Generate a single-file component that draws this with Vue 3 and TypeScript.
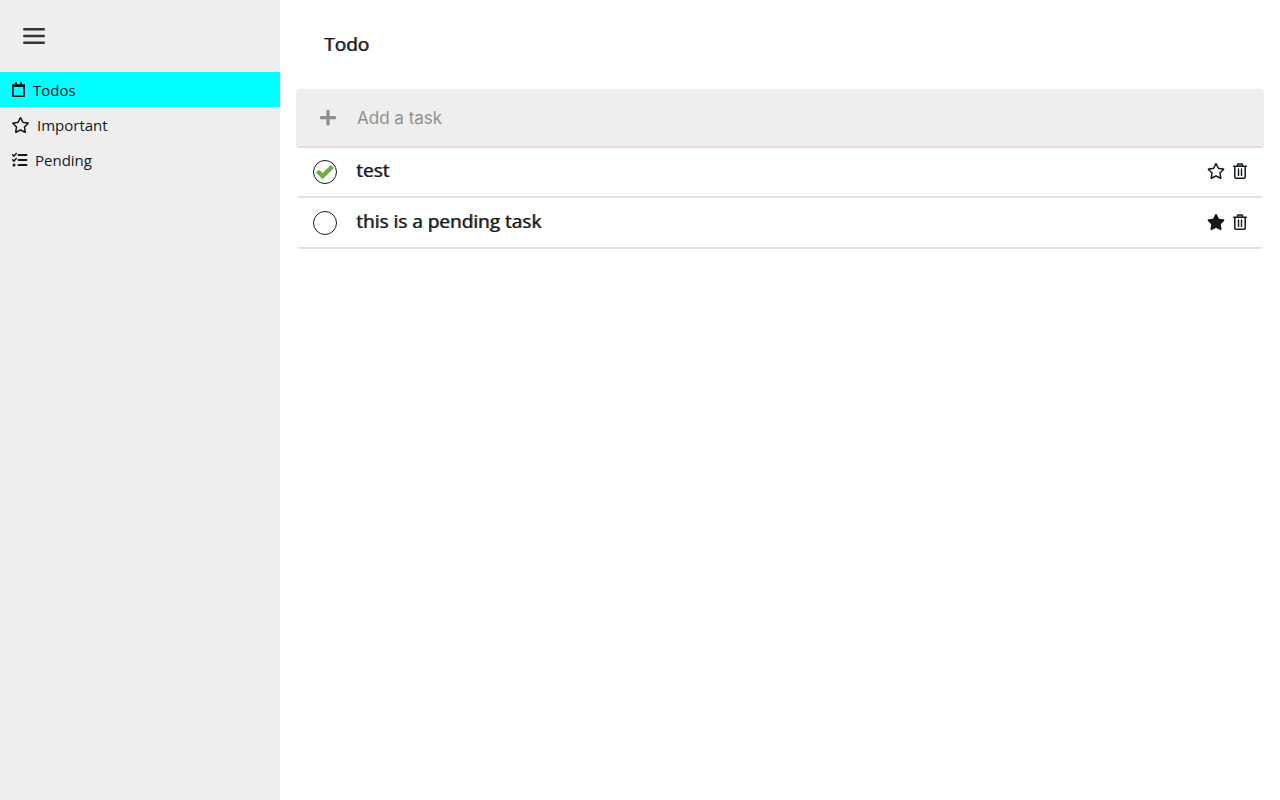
<script setup lang="ts">
import { computed, ref } from 'vue'

interface Task {
  id: number
  title: string
  done: boolean
  important: boolean
}

type View = 'todos' | 'important' | 'pending'

const view = ref<View>('todos')
const draft = ref('')
const tasks = ref<Task[]>([
  { id: 1, title: 'test', done: true, important: false },
  { id: 2, title: 'this is a pending task', done: false, important: true },
])

const visible = computed(() =>
  tasks.value.filter((t) =>
    view.value === 'important' ? t.important : view.value === 'pending' ? !t.done : true,
  ),
)

const starOutline =
  'M528.1 171.5L382 150.2 316.7 17.8c-11.7-23.6-45.6-23.9-57.4 0L194 150.2 47.9 171.5c-26.2 3.8-36.7 36.1-17.7 54.6l105.7 103-25 145.5c-4.5 26.3 23.2 46 46.4 33.7L288 439.6l130.7 68.7c23.2 12.2 50.9-7.4 46.4-33.7l-25-145.5 105.7-103c19-18.5 8.5-50.8-17.7-54.6zM388.6 312.3l23.7 138.4L288 385.4l-124.3 65.3 23.7-138.4-100.6-98 139-20.2 62.2-126 62.2 126 139 20.2-100.6 98z'
const starSolid =
  'M528.1 171.5L382 150.2 316.7 17.8c-11.7-23.6-45.6-23.9-57.4 0L194 150.2 47.9 171.5c-26.2 3.8-36.7 36.1-17.7 54.6l105.7 103-25 145.5c-4.5 26.3 23.2 46 46.4 33.7L288 439.6l130.7 68.7c23.2 12.2 50.9-7.4 46.4-33.7l-25-145.5 105.7-103c19-18.5 8.5-50.8-17.7-54.6z'

function addTask() {
  const title = draft.value.trim()
  if (!title) return
  tasks.value.push({ id: Date.now(), title, done: false, important: false })
  draft.value = ''
}

function removeTask(id: number) {
  tasks.value = tasks.value.filter((t) => t.id !== id)
}
</script>

<template>
  <div class="app">
    <aside class="sidebar">
      <button class="menu" type="button" aria-label="Menu">
        <svg width="24" height="24" viewBox="0 0 24 24">
          <path d="M2.2 5.2h19.6M2.2 12h19.6M2.2 18.8h19.6" fill="none" stroke="#34343c" stroke-width="2.4" stroke-linecap="round" />
        </svg>
      </button>
      <nav class="nav">
        <a href="#todos" :class="{ active: view === 'todos' }" @click.prevent="view = 'todos'">
          <svg width="14" height="16" viewBox="0 0 14 16">
            <path d="M.9 4h11.2v10.2H.9z" fill="none" stroke="currentColor" stroke-width="1.6" stroke-linejoin="round" />
            <path d="M.1 2.2h12.8V5H.1zM3 .2h2v3H3zM8 .2h2v3H8z" fill="currentColor" />
          </svg>
          <span>Todos</span>
        </a>
        <a href="#important" :class="{ active: view === 'important' }" @click.prevent="view = 'important'">
          <svg width="18" height="16" viewBox="16 0 576 512"><path :d="starOutline" fill="currentColor" /></svg>
          <span>Important</span>
        </a>
        <a href="#pending" :class="{ active: view === 'pending' }" @click.prevent="view = 'pending'">
          <svg width="16" height="16" viewBox="0 0 16 16">
            <path d="M6.5 3h8M6.5 8h8M6.5 13h8" fill="none" stroke="currentColor" stroke-width="2" stroke-linecap="round" />
            <path d="M.6 2.8l1.3 1.3L4.3 1.5M.6 7.8l1.3 1.3 2.4-2.6" fill="none" stroke="currentColor" stroke-width="1.5" stroke-linecap="round" />
            <circle cx="2" cy="13" r="1.5" fill="currentColor" />
          </svg>
          <span>Pending</span>
        </a>
      </nav>
    </aside>

    <main class="main">
      <h1 class="title">Todo</h1>
      <form class="add" @submit.prevent="addTask">
        <button class="plus" type="submit" aria-label="Add task">
          <svg width="16" height="16" viewBox="0 0 16 16">
            <path d="M8 1.3v12.8M1.5 7.7h13" fill="none" stroke="#8e8e8e" stroke-width="3.2" stroke-linecap="round" />
          </svg>
        </button>
        <input v-model="draft" type="text" placeholder="Add a task" aria-label="Add a task" />
      </form>
      <ul class="list">
        <li v-for="task in visible" :key="task.id" class="task">
          <button
            class="check"
            type="button"
            role="checkbox"
            :aria-checked="task.done"
            :aria-label="'Done: ' + task.title"
            @click="task.done = !task.done"
          >
            <svg v-if="task.done" width="18" height="16" viewBox="0 0 18 16">
              <path d="M0 8.6L3 5.7 6.6 9.1 14.8 1 18 4 6.6 15.2z" fill="#72b03c" />
            </svg>
          </button>
          <div class="body">
            <span class="name">{{ task.title }}</span>
            <button class="icon" type="button" aria-label="Toggle important" @click="task.important = !task.important">
              <svg width="18" height="16" viewBox="0 0 576 512">
                <path :d="task.important ? starSolid : starOutline" fill="currentColor" />
              </svg>
            </button>
            <button class="icon" type="button" aria-label="Delete task" @click="removeTask(task.id)">
              <svg width="14" height="16" viewBox="0 0 14 16">
                <path d="M3.8 2.8L5 .8h4l1.2 2z" fill="#7f858a" />
                <path d="M4 2.6L4.9.8h4.2L10 2.6" fill="none" stroke="currentColor" stroke-width="1.3" stroke-linejoin="round" />
                <path d="M.7 3.2h12.6M1.8 3.5v10.8q0 .9.9.9h8.6q.9 0 .9-.9V3.5" fill="none" stroke="currentColor" stroke-width="1.5" stroke-linecap="round" />
                <path d="M5.5 6v6.4M8.5 6v6.4" fill="none" stroke="currentColor" stroke-width="1.4" stroke-linecap="round" />
              </svg>
            </button>
          </div>
        </li>
      </ul>
    </main>
  </div>
</template>

<style>
body {
  margin: 0;
  background: #fff;
}
</style>

<style scoped>
.app {
  display: flex;
  min-height: 100vh;
  font-family: 'Open Sans', 'Noto Sans', sans-serif;
  color: #121a21;
}
button {
  display: flex;
  align-items: center;
  justify-content: center;
  padding: 0;
  border: 0;
  background: none;
  color: inherit;
  cursor: pointer;
}
svg {
  display: block;
  flex: none;
}
.sidebar {
  flex: 0 0 280px;
  background: #eee;
}
.menu {
  margin: 24px 22px;
}
.nav a {
  display: flex;
  align-items: center;
  gap: 7px;
  height: 35px;
  padding: 0 12px;
  color: inherit;
  font-size: 15px;
  text-decoration: none;
}
.nav a.active {
  background: #0ff;
}
.main {
  flex: 1;
  min-width: 0;
  padding: 0 16px;
}
.title,
.name {
  font-size: 19px;
  line-height: 25px;
  font-weight: 400;
  text-shadow: 1px 0 rgba(18, 26, 33, 0.65);
}
.title {
  margin: 0;
  padding: 32px 28px;
}
.add {
  display: flex;
  align-items: center;
  gap: 21px;
  height: 57px;
  padding: 0 24px;
  border-bottom: 2px solid #eedcdd;
  border-radius: 4px;
  background: #eee;
}
.add input {
  flex: 1;
  min-width: 0;
  padding: 0;
  border: 0;
  outline: 0;
  background: none;
  color: inherit;
  font-family: Inter, sans-serif;
  font-size: 17px;
}
.add input::placeholder {
  color: #8e8e8e;
  opacity: 1;
}
.list {
  margin: -1px 1px 0;
  padding: 0;
  list-style: none;
}
.task {
  display: flex;
  align-items: center;
  height: 49px;
  padding: 0 16px;
  border-bottom: 2px solid #eedcdd;
  border-radius: 4px;
}
.check {
  width: 24px;
  height: 24px;
  margin-right: 19px;
  border: 1px solid #121a21;
  border-radius: 50%;
}
.body {
  flex: 1;
  display: flex;
  align-items: center;
  gap: 8px;
  min-width: 0;
  padding-bottom: 2px;
}
.name {
  flex: 1;
}
</style>
